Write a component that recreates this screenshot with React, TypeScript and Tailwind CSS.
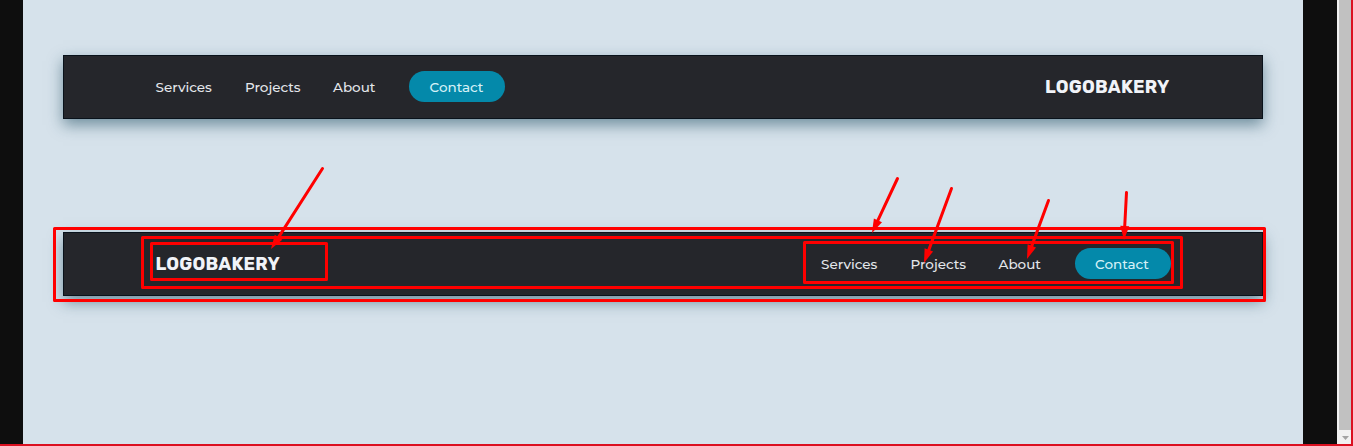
import React from "react";

function NavLinks() {
  return (
    <nav className="flex items-center text-[13.5px] leading-5 font-medium whitespace-nowrap text-[#e4e7eb]">
      <a className="w-[89.5px]">Services</a>
      <a className="w-[88px]">Projects</a>
      <a className="w-[76px]">About</a>
      <a className="mb-px flex h-[31px] w-24 items-center justify-center rounded-full bg-[#0489aa] pr-px text-[#d5f1f7]">
        Contact
      </a>
    </nav>
  );
}

function Logo() {
  return (
    <div className="w-[125.5px] font-['Rubik','Inter',sans-serif] text-[18px] leading-5 font-bold tracking-[0.22px] whitespace-nowrap text-[#f1f3f8]">
      LOGOBAKERY
    </div>
  );
}

function Bar({ children }: { children: React.ReactNode }) {
  return (
    <header className="flex h-16 w-[1200px] items-center justify-between border border-[#09121b] bg-[#25262b] px-[91.5px] shadow-[0_6px_14px_rgba(30,75,95,0.55)]">
      {children}
    </header>
  );
}

const boxes = [
  { x: 53, y: 227, w: 1213, h: 75 },
  { x: 141, y: 236, w: 1042, h: 53 },
  { x: 150, y: 242, w: 178, h: 39 },
  { x: 803, y: 241, w: 371, h: 43 },
];

const arrows = [
  [322.5, 168.5, 271, 249],
  [897.5, 178.5, 872, 233],
  [951.5, 188.5, 924, 263],
  [1048.5, 200.5, 1027, 259],
  [1126.5, 192.5, 1124, 240],
];

function Arrow({ points }: { points: number[] }) {
  const [x1, y1, x2, y2] = points;
  const length = Math.hypot(x2 - x1, y2 - y1);
  const angle = (Math.atan2(y2 - y1, x2 - x1) * 180) / Math.PI;
  return (
    <g transform={`translate(${x1} ${y1}) rotate(${angle})`}>
      <path d={`M0 0H${length - 10}`} stroke="#ff0000" strokeWidth="3" strokeLinecap="round" />
      <path d={`M${length} 0l-14 -4.5v9z`} fill="#ff0000" />
    </g>
  );
}

function Annotations() {
  return (
    <svg className="pointer-events-none absolute top-0 left-0" width="1353" height="446" fill="none">
      {boxes.map((b) => (
        <rect
          key={b.x}
          x={b.x + 1.5}
          y={b.y + 1.5}
          width={b.w - 3}
          height={b.h - 3}
          stroke="#ff0000"
          strokeWidth="3"
          strokeLinejoin="round"
        />
      ))}
      {arrows.map((a) => (
        <Arrow key={a[0]} points={a} />
      ))}
    </svg>
  );
}

export default function App() {
  return (
    <div className="relative h-[446px] w-[1353px] overflow-hidden border-r-2 border-b-2 border-[#db1020] bg-[#0e0e0e] font-['Montserrat','Inter',sans-serif]">
      <div className="flex h-full">
        <main className="ml-[23px] flex w-[1280px] flex-col items-center gap-[113px] bg-[#d6e2eb] pt-[55px]">
          <Bar>
            <NavLinks />
            <Logo />
          </Bar>
          <Bar>
            <Logo />
            <NavLinks />
          </Bar>
        </main>
        <div className="ml-auto flex w-[14px] flex-col bg-[#f1f1f1] pl-0.5">
          <div className="h-[430px] bg-[#c1c1c1]" />
          <svg width="12" height="14" viewBox="0 0 12 14">
            <path d="M3 6h7L6.5 10z" fill="#a3a3a3" />
          </svg>
        </div>
      </div>
      <Annotations />
    </div>
  );
}
